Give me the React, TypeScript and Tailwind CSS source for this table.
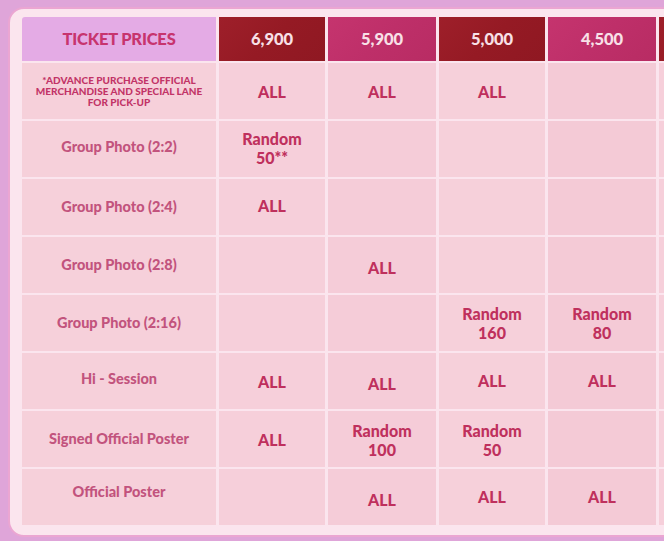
import React from 'react';

type Cell = string[] | null;

interface Row {
  label: React.ReactNode;
  small?: boolean;
  cells: Cell[];
  labelShift?: string;
  shifts?: string[];
}

const prices = [
  { value: '6,900', dark: true },
  { value: '5,900', dark: false },
  { value: '5,000', dark: true },
  { value: '4,500', dark: false },
  { value: '', dark: true },
];

const rows: Row[] = [
  {
    label: (
      <>
        *ADVANCE PURCHASE OFFICIAL
        <br />
        MERCHANDISE AND SPECIAL LANE
        <br />
        FOR PICK-UP
      </>
    ),
    small: true,
    cells: [['ALL'], ['ALL'], ['ALL'], null, null],
  },
  { label: 'Group Photo (2:2)', cells: [['Random', '50**'], null, null, null, null], labelShift: '-translate-y-[2px]', shifts: ['-translate-y-[1px]'] },
  { label: 'Group Photo (2:4)', cells: [['ALL'], null, null, null, null], shifts: ['-translate-y-[2px]'] },
  { label: 'Group Photo (2:8)', cells: [null, ['ALL'], null, null, null], shifts: ['', 'translate-y-[2px]'] },
  { label: 'Group Photo (2:16)', cells: [null, null, ['Random', '160'], ['Random', '80'], null], shifts: ['', '', '', ''] },
  { label: 'Hi - Session', cells: [['ALL'], ['ALL'], ['ALL'], ['ALL'], null], labelShift: '-translate-y-[2px]', shifts: ['', 'translate-y-[2px]', '-translate-y-[1px]', '-translate-y-[1px]'] },
  { label: 'Signed Official Poster', cells: [['ALL'], ['Random', '100'], ['Random', '50'], null, null], shifts: ['', 'translate-y-[1px]', 'translate-y-[1px]'] },
  { label: 'Official Poster', cells: [null, ['ALL'], ['ALL'], ['ALL'], null], labelShift: '-translate-y-[5px]', shifts: ['', 'translate-y-[2px]', '-translate-y-[1px]', '-translate-y-[1px]'] },
];

const cellBg = ['bg-[#f6cfda]', 'bg-[#f5ccd8]', 'bg-[#f6d0da]', 'bg-[#f4cad6]', 'bg-[#f6cfda]'];

export default function App() {
  return (
    <div
      className="w-[664px] h-[541px] overflow-hidden bg-[#dfa5d9] pt-[7px] pl-[8px]"
      style={{ fontFamily: 'Lato, "Open Sans", sans-serif' }}
    >
      <div className="w-[720px] rounded-[16px] border-2 border-[#eba6d2] bg-[#fbe5ee] pl-[12px] pt-[8px] pb-[10px]">
        <div className="grid grid-cols-[194px_106px_108px_106px_108px_108px] grid-rows-[44px_repeat(8,56px)] gap-x-[3px] gap-y-[2px]">
          {/* header row */}
          <div className="flex items-center justify-center rounded-tl-[3px] bg-[#e4abe5] text-[16.5px] font-black tracking-[-0.2px] text-[#c7346e]">
            TICKET PRICES
          </div>
          {prices.map((p, i) => (
            <div
              key={i}
              className={`flex items-center justify-center text-[16.5px] font-black text-[#f8e0e7] ${
                p.dark
                  ? 'bg-[linear-gradient(135deg,#9e1f2a_0%,#951a24_50%,#8f1822_100%)]'
                  : 'bg-[linear-gradient(135deg,#c5346e_0%,#be2f69_50%,#b82c63_100%)]'
              }`}
            >
              {p.value}
            </div>
          ))}

          {rows.map((row, r) => (
            <React.Fragment key={r}>
              <div className="flex items-center justify-center bg-[#f6d0da] text-center">
                {row.small ? (
                  <span className="text-[10px] font-black leading-[11px] text-[#c23467]">{row.label}</span>
                ) : (
                  <span className={`text-[14.5px] font-black text-[#c2537d] ${row.labelShift ?? ''}`}>{row.label}</span>
                )}
              </div>
              {row.cells.map((c, i) => (
                <div key={i} className={`flex items-center justify-center text-center ${cellBg[i]}`}>
                  {c && (
                    <span
                      className={`block text-[16px] font-black leading-[19px] text-[#bf305d] ${row.shifts?.[i] ?? ''}`}
                    >
                      {c[0]}
                      {c[1] && (
                        <>
                          <br />
                          {c[1]}
                        </>
                      )}
                    </span>
                  )}
                </div>
              ))}
            </React.Fragment>
          ))}
        </div>
      </div>
    </div>
  );
}
